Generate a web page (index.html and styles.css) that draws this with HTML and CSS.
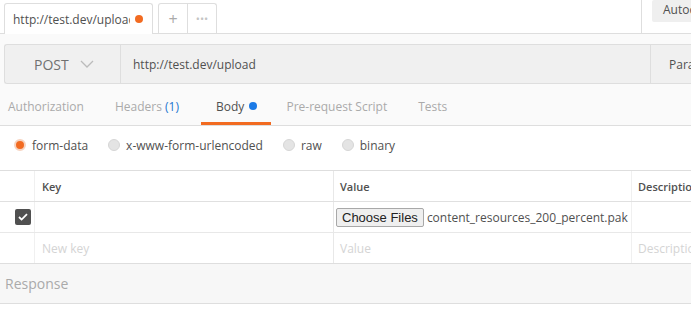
FILE: index.html
```html
<!DOCTYPE html>
<html lang="en">
<head>
  <meta charset="UTF-8" />
  <title>Postman – upload</title>
  <link rel="stylesheet" href="styles.css">
</head>
<body>
  <div class="tabbar">
    <div class="tab active">
      <span class="tab-title">http://test.dev/upload</span>
      <span class="dot orange"></span>
    </div>
    <div class="tab small plus">+</div>
    <div class="tab small more">&bull;&bull;&bull;</div>
    <div class="tabbar-fill"></div>
    <div class="env">
      <div class="env-btn">Autocomplete</div>
    </div>
  </div>

  <div class="request-area">
    <div class="request-bar">
      <div class="method">
        POST
        <svg width="14" height="8" viewBox="0 0 14 8"><path d="M1 1l6 6 6-6" fill="none" stroke="#bbb" stroke-width="1.3"/></svg>
      </div>
      <div class="url">http://test.dev/upload</div>
      <div class="params">Params</div>
    </div>

    <nav class="req-tabs">
      <span class="req-tab auth">Authorization</span>
      <span class="req-tab headers">Headers <span class="count">(1)</span></span>
      <span class="req-tab current">Body <span class="dot blue"></span></span>
      <span class="req-tab script">Pre-request Script</span>
      <span class="req-tab tests">Tests</span>
    </nav>
  </div>

  <div class="body-modes">
    <label class="mode"><span class="radio on"></span>form-data</label>
    <label class="mode"><span class="radio"></span>x-www-form-urlencoded</label>
    <label class="mode"><span class="radio"></span>raw</label>
    <label class="mode"><span class="radio"></span>binary</label>
  </div>

  <div class="kv-table">
    <div class="kv-row head">
      <div class="cell check"></div>
      <div class="cell key">Key</div>
      <div class="cell value">Value</div>
      <div class="cell desc">Description</div>
    </div>
    <div class="kv-row">
      <div class="cell check">
        <span class="checkbox">
          <svg width="10" height="8" viewBox="0 0 10 8"><path d="M1 4l2.6 2.6L9 1.2" fill="none" stroke="#fff" stroke-width="1.8"/></svg>
        </span>
      </div>
      <div class="cell key"></div>
      <div class="cell value file-cell">
        <span class="file-btn">Choose Files</span>
        <span class="file-name">content_resources_200_percent.pak</span>
      </div>
      <div class="cell desc"></div>
    </div>
    <div class="kv-row placeholder">
      <div class="cell check"></div>
      <div class="cell key">New key</div>
      <div class="cell value">Value</div>
      <div class="cell desc">Description</div>
    </div>
  </div>

  <div class="response">Response</div>
</body>
</html>
```

FILE: styles.css
```css
body {
  margin: 0;
  font-family: 'Open Sans', 'Noto Sans', sans-serif;
  color: #505050;
  background: #fff;
  width: 691px;
  overflow: hidden;
}
.tabbar {
  display: flex;
  height: 33px;
  border-bottom: 1px solid #dedede;
  background: #fff;
  padding-left: 4px;
}
.tab {
  display: flex;
  flex-shrink: 0;
  align-items: center;
  margin-top: 3px;
  height: 30px;
  box-sizing: border-box;
  border: 1px solid #dedede;
  border-bottom: none;
  font-size: 12px;
  background: #fff;
}
.tab.active {
  width: 149px;
  height: 31px;
  margin-bottom: -1px;
  padding: 0 9px 0 8px;
  justify-content: space-between;
  border-radius: 3px 3px 0 0;
}
.tab-title {
  width: 117px;
  overflow: hidden;
  white-space: nowrap;
}
.tab.small {
  justify-content: center;
  color: #aaa;
}
.tab.plus {
  width: 30px;
  margin-left: 5px;
  font-size: 16px;
  border-radius: 3px 0 0 0;
}
.tab.more {
  width: 29px;
  border-left: none;
  font-size: 11px;
  color: #c4c4c4;
  border-radius: 0 3px 0 0;
}
.tabbar-fill {
  flex: 1;
}
.env {
  width: 39px;
  flex-shrink: 0;
  border-left: 1px solid #dedede;
  padding-left: 10px;
  overflow: hidden;
}
.env-btn {
  height: 22px;
  line-height: 20px;
  background: #efefef;
  padding-left: 11px;
  font-size: 12px;
  white-space: nowrap;
  border-radius: 2px 0 0 2px;
}
.dot {
  display: inline-block;
  width: 8px;
  height: 8px;
  border-radius: 50%;
}
.dot.orange {
  background: #f26b21;
}
.dot.blue {
  background: #1b7ae6;
  margin-left: 2px;
  vertical-align: 1px;
}
.request-area {
  background: #fafafa;
  padding-top: 10px;
  border-bottom: 1px solid #dedede;
}
.request-bar {
  display: flex;
  height: 40px;
  margin-left: 4px;
  border: 1px solid #dedede;
  border-right: none;
  box-sizing: border-box;
  background: #f0f0f0;
  border-radius: 3px 0 0 3px;
}
.method {
  width: 116px;
  box-sizing: border-box;
  border-right: 1px solid #dedede;
  display: flex;
  align-items: center;
  padding-left: 29px;
  gap: 11px;
  font-size: 14px;
  color: #707070;
}
.url {
  width: 529px;
  box-sizing: border-box;
  padding-left: 12px;
  display: flex;
  align-items: center;
  font-size: 12px;
}
.params {
  flex: 1;
  border-left: 1px solid #dedede;
  padding-left: 18px;
  display: flex;
  align-items: center;
  font-size: 12px;
  white-space: nowrap;
  overflow: hidden;
}
.req-tabs {
  display: flex;
  height: 35px;
  margin-top: 6px;
  padding-left: 8px;
}
.req-tab {
  font-size: 12px;
  color: #aaa;
  line-height: 33px;
  white-space: nowrap;
}
.req-tab.auth { margin-right: 31px; }
.req-tab.headers { margin-right: 22px; }
.req-tab.script { margin-right: 31px; }
.req-tab.current {
  color: #505050;
  padding: 0 14px 0 15px;
  margin-right: 15px;
  border-bottom: 3px solid #f26b21;
  height: 32px;
}
.count {
  color: #1f77d0;
}
.body-modes {
  display: flex;
  align-items: center;
  height: 38px;
  padding: 0 0 6px 14px;
  gap: 20px;
  font-size: 12px;
}
.mode {
  display: flex;
  align-items: center;
  gap: 6px;
}
.radio {
  width: 12px;
  height: 12px;
  border-radius: 50%;
  background: #e4e4e4;
  box-sizing: border-box;
  border: 1px solid #d6d6d6;
}
.radio.on {
  background: #f26b21;
  border: 2px solid #f6d3c0;
}
.kv-table {
  border-top: 1px solid #dedede;
  border-bottom: 1px solid #dedede;
}
.kv-row {
  display: flex;
  height: 30px;
  border-top: 1px solid #e8e8e8;
}
.kv-row.head {
  border-top: none;
  border-bottom: 1px solid #e0e0e0;
}
.kv-row.head + .kv-row {
  border-top: none;
}
.cell {
  box-sizing: border-box;
  display: flex;
  align-items: center;
  font-size: 11px;
  white-space: nowrap;
  overflow: hidden;
}
.cell.check { width: 35px; justify-content: center; padding-left: 11px; border-right: 1px solid #f0f0f0; }
.cell.key { width: 299px; padding-left: 7px; border-right: 1px solid #e8e8e8; }
.cell.value { width: 298px; padding-left: 6px; border-right: 1px solid #f0f0f0; }
.cell.file-cell { padding-left: 2px; }
.cell.desc { flex: 1; padding-left: 6px; }
.head .cell { font-weight: 600; }
.placeholder .cell {
  color: #d4d4d4;
  font-size: 12px;
}
.checkbox {
  width: 16px;
  height: 16px;
  background: #505050;
  border-radius: 2px;
  display: flex;
  align-items: center;
  justify-content: center;
}
.file-btn {
  font-family: 'Liberation Sans', Arial, sans-serif;
  font-size: 13px;
  color: #222;
  background: #efefef;
  border: 1px solid #a8a8a8;
  border-radius: 2px;
  padding: 1px 5px;
  height: 19px;
  box-sizing: border-box;
  line-height: 15px;
}
.file-name {
  font-size: 12px;
  margin-left: 3px;
  color: #505050;
}
.response {
  height: 39px;
  background: #f7f7f7;
  border-bottom: 1px solid #dedede;
  line-height: 39px;
  padding-left: 5px;
  font-size: 14px;
  color: #aaa;
}
```
